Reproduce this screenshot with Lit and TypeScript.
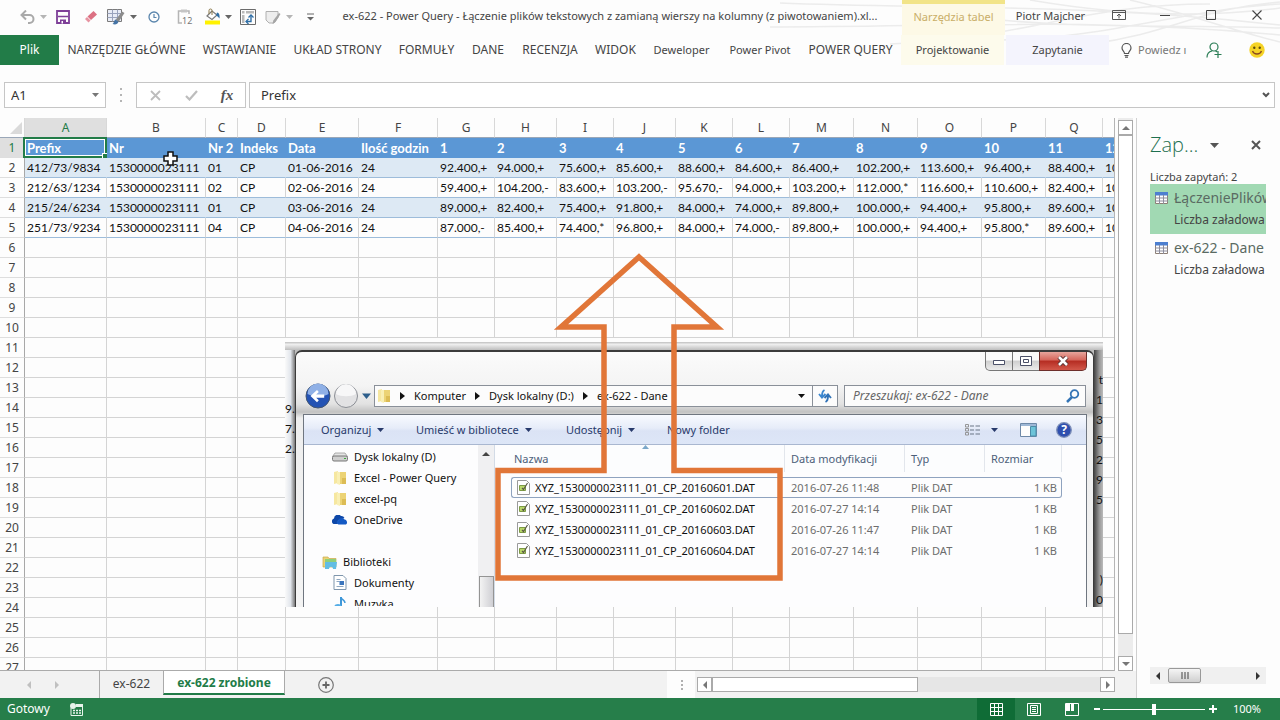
import { LitElement, html, css, svg, nothing } from "lit";
import { customElement } from "lit/decorators.js";
import { classMap } from "lit/directives/class-map.js";

const icon = (w: number, h: number, body: unknown) =>
  html`<svg width=${w} height=${h} viewBox="0 0 ${w} ${h}" fill="none" aria-hidden="true">${body}</svg>`;

const caret = (color: string) => icon(7, 4, svg`<path d="M0 0h7L3.500 4z" fill=${color} />`);
const arrow = (dir: "up" | "down" | "left" | "right", color: string) => {
  const d = { up: "M0 6l4-4 4 4z", down: "M0 2l4 4 4-4z", left: "M6 0L2 4l4 4z", right: "M2 0l4 4-4 4z" }[dir];
  return icon(8, 8, svg`<path d=${d} fill=${color} />`);
};

const pen = svg`<path d="M15 3.500l2.500 1.500-6 9-3-2z" fill="#8c8c8c"/><path d="M8.500 11.500l3 2.200c-1 3-3.500 3-6 2.300 1.500-.7 1.300-3.500 3-4.500z" fill="#4473a5"/>`;

const icons = {
  undo: icon(16, 14, svg`<path d="M2 5h7.500a4 4 0 010 8H8" stroke="#a9a9a9" stroke-width="2"/><path d="M6 .5L1.500 5 6 9.500" stroke="#a9a9a9" stroke-width="2"/>`),
  save: icon(14, 14, svg`<path d="M1 1h12v12H1z" stroke="#7e3f98" stroke-width="1.800"/><path d="M2 6.500h10" stroke="#7e3f98" stroke-width="1.500"/><path d="M4 9.500h6V14H4z" fill="#7e3f98"/><path d="M5.500 11H7v2.500H5.500z" fill="#fff"/>`),
  eraser: icon(14, 14, svg`<path d="M9.500 1L13 4.500 7 10 3.500 6.500z" fill="#dc7183"/><path d="M3 7l3.500 3.500L4.500 12.500 1 9z" fill="#e794a2"/>`),
  tablePen: icon(18, 17, svg`<path d="M.5 1.500h14v12H.500z" fill="#e9ecf6" stroke="#7a7a7a"/><path d="M.5 5.500h14M.5 9.500h14M5.500 1.500v12M10.500 1.500v12" stroke="#9aa3bd"/>${pen}`),
  clock: icon(12, 12, svg`<circle cx="6" cy="6" r="5" stroke="#5b86ad" stroke-width="1.300"/><path d="M6 3v3.500h2.500" stroke="#5b86ad" stroke-width="1.200"/>`),
  paste: icon(16, 17, svg`<path d="M5 15H1.500V3H12v3" stroke="#b5b5b5" stroke-width="1.500"/><path d="M4 1.500h6v3H4z" fill="#c5c5c5"/><text x="5" y="15.500" font-size="9" font-family="Noto Sans" fill="#777">12</text>`),
  fill: icon(17, 17, svg`<path d="M1 12.500h15v4H1z" fill="#fff200"/><path d="M3 8l5-5 5 4-5 4.500z" fill="#fff" stroke="#7a7a7a" stroke-width="1.200"/><path d="M5 6V2.500a1.500 1.500 0 013 0V7" stroke="#8c7a4a"/><path d="M13 4.500c2 .500 3 2 2.500 6-1.200-1.500-2-2.500-3.500-3z" fill="#2f6ea5"/>`),
  pivot: icon(16, 16, svg`<path d="M.5.5h15v15H.500z" stroke="#6b6b6b"/><path d="M2 2h2.500v2.500H2zM6 2h8v2.500H6zM2 6h2.500v8H2z" fill="#b9b9b9"/><path d="M6.500 12.500h4.500V7" stroke="#2f6ea5" stroke-width="1.400"/><path d="M8.500 10l-2.500 2.500 2.500 2.500M8.500 8.500L11 6l2.500 2.500" stroke="#2f6ea5" stroke-width="1.300"/>`),
  formPen: icon(16, 16, svg`<path d="M1 2.500h12v6L9 14H4l-3-3z" fill="#ededed" stroke="#b0b0b0"/><path d="M14 4l1.500 1-5 8-3 2 .8-3.500z" fill="#a5a5a5"/>`),
  customize: icon(7, 8, svg`<path d="M0 1h7" stroke="#666"/><path d="M0 4h7L3.500 7.500z" fill="#666"/>`),
  ribbonDisplay: icon(14, 10, svg`<path d="M.5.500h13v9H.500zM.5 2.500h13" stroke="#555"/><path d="M7 8.500V4.500M5 6l2-2 2 2" stroke="#555"/>`),
  minimize: icon(10, 10, svg`<path d="M0 5.500h10" stroke="#444"/>`),
  maximize: icon(10, 10, svg`<path d="M.5.500h9v9H.500z" stroke="#444"/>`),
  close: icon(10, 10, svg`<path d="M.5.500l9 9M9.500.500l-9 9" stroke="#444" stroke-width="1.100"/>`),
  bulb: icon(11, 15, svg`<path d="M3.500 10.500c0-2-2.500-2.800-2.500-5.500a4.500 4.500 0 019 0c0 2.700-2.500 3.500-2.500 5.500zM3.500 12.500h4M4 14.200h3" stroke="#555" stroke-width="1.200"/>`),
  share: icon(16, 16, svg`<circle cx="8" cy="5" r="4" stroke="#2a7d55" stroke-width="1.200"/><path d="M1 15.500c0-4 2.500-6 5-6.500M9.500 9l2 1" stroke="#2a7d55" stroke-width="1.200"/><path d="M12 9v7M8.500 12.500h7" stroke="#2a7d55" stroke-width="1.200"/>`),
  smile: icon(16, 16, svg`<circle cx="8" cy="8" r="7.700" fill="#f5d327"/><circle cx="5.300" cy="5.700" r="1.200" fill="#5b4a10"/><circle cx="10.700" cy="5.700" r="1.200" fill="#5b4a10"/><path d="M3.500 9c1.500 4 7.500 4 9 0" stroke="#8b4a20" stroke-width="1.300"/>`),
  cancel: icon(11, 11, svg`<path d="M1 1l9 9M10 1l-9 9" stroke="#bdbdbd" stroke-width="1.800"/>`),
  accept: icon(13, 11, svg`<path d="M1 6l3.500 3.500L12 1" stroke="#bdbdbd" stroke-width="2.200"/>`),
  chevron: icon(8, 6, svg`<path d="M1 1l3 3 3-3" stroke="#555" stroke-width="2"/>`),
  corner: icon(12, 12, svg`<path d="M12 0v12H0z" fill="#dadada"/>`),
  query: icon(13, 12, svg`<path d="M.5.500h12v11H.500z" fill="#fff" stroke="#8d7f74"/><path d="M0 0h13v3.500H0z" fill="#4d7fd0"/><path d="M0 6h13M0 9h13M4.500 3v9M8.500 3v9" stroke="#8d8d9d"/>`),
  closeBold: icon(10, 10, svg`<path d="M1 1l8 8M9 1l-8 8" stroke="#555" stroke-width="2"/>`),
  add: icon(16, 16, svg`<circle cx="8" cy="8" r="7.300" stroke="#777" stroke-width="1.200"/><path d="M8 4.500v7M4.500 8h7" stroke="#666" stroke-width="1.800"/>`),
  macro: icon(13, 13, svg`<path d="M1 5v7.500h11.500V1.500H7" stroke="#e8f4ec"/><circle cx="3" cy="3" r="3" fill="#e8f4ec"/><path d="M6 1h7v3H6z" fill="#e8f4ec"/><path d="M3 7.500h2M6 7.500h2M9 7.500h2M3 10h2M6 10h2M9 10h2" stroke="#e8f4ec" stroke-width="1.500"/>`),
  normal: icon(13, 13, svg`<path d="M.5.500h12v12H.500zM.5 4.500h12M.5 8.500h12M4.500.500v12M8.500.500v12" stroke="#fff"/>`),
  layout: icon(14, 13, svg`<path d="M.5.500h13v12H.500z" stroke="#fff"/><path d="M3.500 2.500h7v8h-7zM5 4.500h4M5 6.500h4M5 8.500h4" stroke="#fff"/>`),
  breaks: icon(14, 13, svg`<path d="M.5.500h13v12H.500z" stroke="#fff"/><path d="M1 1h4v7H1zM6 1h3v7H6z" fill="#fff"/>`),
  folder: icon(14, 16, svg`<path d="M1 2l4-1v12l-4 1z" fill="#f6e7a0"/><path d="M4 2h9v12H4z" fill="#ecd375"/><path d="M4 2h3v13l-3-1z" fill="#f9efb5"/><path d="M9 8h4v6H9z" fill="#dcbc55"/>`),
  drive: icon(16, 10, svg`<path d="M3 1h10l2.500 3.500h-15z" fill="#e4e4e4" stroke="#999" stroke-width=".8"/><rect x=".5" y="4" width="15" height="5" rx="1.500" fill="#cfcfcf" stroke="#777"/><path d="M12 6.500h2" stroke="#3fa83f"/>`),
  cloud: icon(15, 10, svg`<path d="M1 9a3 3 0 01.500-5.500A4 4 0 018.500 1 3.500 3.500 0 0112 3L6 5 5 9z" fill="#0d47a8"/><path d="M6 9.500a2.300 2.300 0 010-4.500 3.500 3.500 0 016-.5c2.500 0 3.500 4 1.500 5z" fill="#1459c4"/>`),
  library: icon(16, 14, svg`<path d="M1 2h5l1 1.500h7V12H1z" fill="#ecd375" stroke="#c9a94a" stroke-width=".7"/><path d="M3 4h11v3H3z" fill="#8fcf7a"/><path d="M3 7h12l-1 7h-3c0-3-4-3-4 0H3z" fill="#62bde4"/>`),
  doc: icon(13, 15, svg`<path d="M.5.500h9l3 3v11H.500z" fill="#fff" stroke="#7f96ad"/><path d="M3 4.500h4M3 6.500h3M3 11.500h7" stroke="#8fa7c0"/><path d="M6 6h4.500v4H6z" fill="#3b75bd"/>`),
  music: icon(13, 15, svg`<path d="M7.500 1v9.500" stroke="#3f97d8" stroke-width="2"/><path d="M7.500 1c.5 3 4 3 4 6" stroke="#3f97d8" stroke-width="1.500"/><ellipse cx="4.500" cy="11" rx="3.800" ry="3" fill="#55ade6"/>`),
  dat: icon(13, 15, svg`<path d="M.5.500h9l3 3v11H.500z" fill="#fff" stroke="#9a9a9a"/><path d="M2.500 5.500h6v5h-6z" fill="#b9d86a" stroke="#7d9a45"/><path d="M5 8l1.500 1.500 4-6.500" stroke="#5b5b45" stroke-width="1.200"/>`),
  back: icon(26, 26, svg`<circle cx="13" cy="13" r="12" fill="#2453b4" stroke="#44566f"/><path d="M2.500 11a10.500 10.500 0 0121 0c-5 3-15 3-21 0z" fill="#8fb0e6"/><path d="M5.500 13l6.500-6 1.800 2-2.600 2.500h8v3.200h-8l2.600 2.500-1.800 2z" fill="#fff"/>`),
  forward: icon(26, 26, svg`<circle cx="13" cy="13" r="11.500" fill="#e2e2e4" stroke="#8b8e95"/><path d="M3 11a10 10 0 0120 0c-5 3-15 3-20 0z" fill="#f7f7f8"/>`),
  refresh: icon(14, 14, svg`<path d="M6.500 1C4.500 2 4 4 4 7M1 5l3 3.500L7.500 5" stroke="#3b86cf" stroke-width="1.900"/><path d="M7.500 13c2-1 2.500-3 2.500-6M6.500 9L10 5.500 13 9" stroke="#2f72b8" stroke-width="1.900"/>`),
  search: icon(14, 14, svg`<circle cx="8.500" cy="5" r="3.800" stroke="#3474b5" stroke-width="1.800"/><path d="M6 8l-5 5" stroke="#3474b5" stroke-width="2.500"/>`),
  views: icon(15, 12, svg`<path d="M.5.500h3v2.500h-3zM.5 4.500h3V7h-3zM.5 8.500h3V11h-3z" stroke="#8c8c8c" stroke-width=".9"/><path d="M5 2h4M10.500 2H15M5 6h4M10.500 6H15M5 10h4M10.500 10H15" stroke="#6b7686" stroke-width="1.200"/>`),
  preview: icon(17, 14, svg`<path d="M.5.500h16v13H.500z" fill="#fdfdfd" stroke="#6d88a8"/><path d="M1 1h15v2H1z" fill="#9db7d6"/><path d="M10.500 3.500h5.500v9.500h-5.500z" fill="#6cc3d8" stroke="#4a8ba8"/>`),
  help: icon(16, 16, svg`<circle cx="8" cy="8" r="7.300" fill="#2f4fae" stroke="#7d8fb8" stroke-width="1.300"/><text x="8" y="12.200" text-anchor="middle" font-size="12" font-weight="700" font-family="Noto Sans" fill="#fff">?</text>`),
};

const columns: [string, number][] = [
  ["A", 82], ["B", 99], ["C", 32], ["D", 48], ["E", 73], ["F", 79], ["G", 57], ["H", 62], ["I", 57],
  ["J", 62], ["K", 57], ["L", 57], ["M", 64], ["N", 64], ["O", 64], ["P", 64], ["Q", 57], ["", 12],
];

const sheetData = [
  ["Prefix", "Nr", "Nr 2", "Indeks", "Data", "Ilość godzin", "1", "2", "3", "4", "5", "6", "7", "8", "9", "10", "11", "12"],
  ["412/73/9834", "1530000023111", "01", "CP", "01-06-2016", "24", "92.400,+", "94.000,+", "75.600,+", "85.600,+", "88.600,+", "84.600,+", "86.400,+", "102.200,+", "113.600,+", "96.400,+", "88.400,+", "10"],
  ["212/63/1234", "1530000023111", "02", "CP", "02-06-2016", "24", "59.400,+", "104.200,-", "83.600,+", "103.200,-", "95.670,-", "94.000,+", "103.200,+", "112.000,*", "116.600,+", "110.600,+", "82.400,+", "10"],
  ["215/24/6234", "1530000023111", "01", "CP", "03-06-2016", "24", "89.000,+", "82.400,+", "75.400,+", "91.800,+", "84.000,+", "74.000,+", "89.800,+", "100.000,+", "94.400,+", "95.800,+", "89.600,+", "10"],
  ["251/73/9234", "1530000023111", "04", "CP", "04-06-2016", "24", "87.000,-", "85.400,+", "74.400,*", "96.800,+", "84.000,+", "74.000,-", "89.800,+", "100.000,+", "94.400,+", "95.800,*", "89.600,+", "10"],
];

const ribbonTabs = ["NARZĘDZIE GŁÓWNE", "WSTAWIANIE", "UKŁAD STRONY", "FORMUŁY", "DANE", "RECENZJA", "WIDOK", "Deweloper", "Power Pivot", "POWER QUERY"];

const base = css`
  * { box-sizing: border-box; }
  button { border: 0; padding: 0; margin: 0; background: none; font: inherit; color: inherit; display: flex; align-items: center; justify-content: center; white-space: nowrap; }
  input { border: 0; padding: 0; margin: 0; background: none; font: inherit; color: inherit; min-width: 0; outline: 0; }
  svg { display: block; flex: none; }
  table { border-collapse: separate; border-spacing: 0; table-layout: fixed; }
  th, td { padding: 0; text-align: left; font-weight: 400; white-space: nowrap; }
`;

@customElement("app-titlebar")
class AppTitlebar extends LitElement {
  static styles = [base, css`
    :host { display: block; position: relative; color: #444; font-size: 11px; }
    .swirl { position: absolute; top: 0; right: 0; z-index: 0; }
    .title, .ribbon { position: relative; display: flex; }
    .title { height: 35px; }
    .ribbon { height: 30px; }
    .qat { display: grid; grid-template-columns: 20px 11px 28px 28px 22px 12px 30px 32px 23px 9px 30px 20px 12px 30px; padding-left: 18px; height: 33px; align-items: center; flex: none; }
    .qat button { height: 24px; }
    h1 { margin: 0; flex: 1; font-size: 11px; line-height: 32px; font-weight: 400; text-align: center; white-space: nowrap; overflow: hidden; min-width: 0; }
    .context { width: 103px; margin-left: 7px; border-top: 4px solid #f2e488; background: #fdf9e6; color: #c9ae68; line-height: 25px; text-align: center; flex: none; }
    .user { width: 91px; line-height: 32px; text-align: center; flex: none; }
    .window { display: flex; height: 30px; flex: none; }
    .window button { width: 46px; }
    .file { width: 59px; background: #227c48; color: #fff; font-size: 12px; flex: none; }
    .tabs { display: grid; grid-template-columns: 135px 91px 105px 73px 50px 74px 57px 75px 82px 99px; margin-right: auto; }
    .tabs .caps { font-size: 12px; }
    .design { width: 103px; background: #fdfbec; margin-right: 2px; flex: none; }
    .query { width: 103px; background: #f4f4fd; flex: none; }
    .tell { width: 91px; gap: 6px; padding-left: 12px; justify-content: flex-start; color: #777; flex: none; }
    .share { width: 28px; flex: none; }
    .smile { width: 52px; padding-left: 6px; flex: none; }
  `];
  render() {
    const q = (label: string, body: unknown) => html`<button aria-label=${label}>${body}</button>`;
    return html`
      <svg class="swirl" width="620" height="46" viewBox="0 0 620 46" fill="none" stroke="#ececec" stroke-width="1.500" aria-hidden="true">
        <path d="M120 3c150 6 300 0 500 22M110 27c180 0 330-10 510 8M370 0c70 12 160 20 250 8M230 44c140-6 190-40 320-40M470 0c60 14 100 30 150 42M340 40c110-2 180-30 280-36M430 44c80-10 110-36 190-42M300 16c120 14 200 8 320 12" />
      </svg>
      <div class="title">
        <div class="qat">
          ${q("Cofnij", icons.undo)}${q("Lista cofania", caret("#b5b5b5"))}${q("Zapisz", icons.save)}${q("Wyczyść", icons.eraser)}
          ${q("Format", icons.tablePen)}${q("Opcje formatu", caret("#666"))}${q("Czas", icons.clock)}${q("Wklej wartości", icons.paste)}
          ${q("Wypełnienie", icons.fill)}${q("Kolor wypełnienia", caret("#666"))}${q("Tabela przestawna", icons.pivot)}
          ${q("Formularz", icons.formPen)}${q("Opcje formularza", caret("#b5b5b5"))}${q("Dostosuj", icons.customize)}
        </div>
        <h1>ex-622 - Power Query - Łączenie plików tekstowych z zamianą wierszy na kolumny (z piwotowaniem).xl...</h1>
        <div class="context">Narzędzia tabel</div>
        <div class="user">Piotr Majcher</div>
        <div class="window">
          ${q("Wstążka", icons.ribbonDisplay)}${q("Minimalizuj", icons.minimize)}${q("Maksymalizuj", icons.maximize)}${q("Zamknij", icons.close)}
        </div>
      </div>
      <nav class="ribbon">
        <button class="file">Plik</button>
        <div class="tabs">${ribbonTabs.map((t) => html`<button class=${classMap({ caps: t === t.toUpperCase() })}>${t}</button>`)}</div>
        <button class="design">Projektowanie</button>
        <button class="query">Zapytanie</button>
        <button class="tell">${icons.bulb}Powiedz ı</button>
        <button class="share" aria-label="Udostępnij">${icons.share}</button>
        <button class="smile" aria-label="Opinia">${icons.smile}</button>
      </nav>`;
  }
}

@customElement("formula-bar")
class FormulaBar extends LitElement {
  static styles = [base, css`
    :host { display: flex; height: 26px; margin: 17px 5px 10px 4px; color: #333; font-size: 13px; }
    .box { display: flex; border: 1px solid #c6c6c6; background: #fff; align-items: center; }
    .name { width: 102px; padding: 0 6px; }
    .name input { flex: 1; }
    .dots { width: 30px; display: flex; align-items: center; justify-content: center; }
    .tools { width: 110px; justify-content: space-around; margin-right: 3px; }
    .tools button { width: 32px; height: 24px; }
    .fx { font: italic 700 15px "Liberation Serif", serif; color: #555; }
    .formula { flex: 1; padding: 0 4px 0 11px; }
    .formula input { flex: 1; }
  `];
  render() {
    return html`
      <div class="box name"><input aria-label="Pole nazwy" value="A1" /><button aria-label="Lista nazw">${caret("#777")}</button></div>
      <div class="dots">${icon(2, 14, svg`<path d="M0 0h2v2H0zM0 6h2v2H0zM0 12h2v2H0z" fill="#b5b5b5"/>`)}</div>
      <div class="box tools">
        <button aria-label="Anuluj">${icons.cancel}</button><button aria-label="Wpis">${icons.accept}</button><button class="fx">fx</button>
      </div>
      <div class="box formula"><input aria-label="Pasek formuły" value="Prefix" /><button aria-label="Rozwiń pasek formuły">${icons.chevron}</button></div>`;
  }
}

@customElement("sheet-grid")
class SheetGrid extends LitElement {
  static styles = [base, css`
    :host { display: block; color: #111; font: 12px/18px Lato, sans-serif; }
    table { width: 1115px; }
    tr, th, td { height: 20px; }
    td { padding: 1px 0 0 2px; border-right: 1px solid #d4d4d4; border-bottom: 1px solid #d4d4d4; position: relative; }
    thead th, tbody th { font: 12px/18px "Noto Sans", sans-serif; text-align: center; color: #444; padding-top: 1px; }
    thead th { border-right: 1px solid #d8d8d8; border-bottom: 1px solid #9aa7b8; }
    tbody th { border-right: 1px solid #a8a8a8; border-bottom: 1px solid #dedede; }
    .corner svg { margin-left: 10px; }
    thead th.on, tbody th.on { background: #dfdfdf; color: #227c48; }
    .head td { background: #5b97d5; color: #fff; font-weight: 700; font-size: 13px; border-color: #5b97d5; }
    .band td { background: #dde9f4; border-color: #dde9f4; }
    .data td { border-bottom-color: #9dbcda; }
    td:last-child { overflow: hidden; }
    .cursor-cell { position: absolute; inset: -1px -1px -1px -2px; border: 2px solid #227c48; box-shadow: inset 0 0 0 1px #fff; }
    .handle { position: absolute; right: -3px; bottom: -3px; width: 6px; height: 6px; background: #227c48; border: solid #fff; border-width: 1px 0 0 1px; }
  `];
  render() {
    return html`<table>
      <colgroup><col style="width:25px" />${columns.map(([, w]) => html`<col style="width:${w}px" />`)}</colgroup>
      <thead><tr><th class="corner">${icons.corner}</th>${columns.map(([n], i) => html`<th class=${classMap({ on: i === 0 })}>${n}</th>`)}</tr></thead>
      <tbody>${Array.from({ length: 27 }, (_, r) => html`
        <tr class=${classMap({ head: r === 0, data: r > 0 && r < 5, band: r === 1 || r === 3 })}>
          <th class=${classMap({ on: r === 0 })}>${r + 1}</th>
          ${columns.map((_c, c) => html`<td>${sheetData[r]?.[c] ?? nothing}${r === 0 && c === 0 ? html`<span class="cursor-cell"><span class="handle"></span></span>` : nothing}</td>`)}
        </tr>`)}
      </tbody>
    </table>`;
  }
}

const files: [string, string][] = [
  ["XYZ_1530000023111_01_CP_20160601.DAT", "2016-07-26 11:48"],
  ["XYZ_1530000023111_01_CP_20160602.DAT", "2016-07-27 14:14"],
  ["XYZ_1530000023111_01_CP_20160603.DAT", "2016-07-26 11:47"],
  ["XYZ_1530000023111_01_CP_20160604.DAT", "2016-07-27 14:14"],
];

@customElement("explorer-window")
class ExplorerWindow extends LitElement {
  static styles = [base, css`
    :host { display: grid; grid-template-columns: 10px 1fr 9px; width: 818px; height: 269px; padding-top: 12px; overflow: hidden; color: #111; font: 11px/20px "Noto Sans", sans-serif; background: linear-gradient(#fdfdfd 4px, #c9c9c9 4px, #c9c9c9 5px, #f2f2f2 6px, #bdbdbd 12px); }
    .edge { font: 12px/20px Lato, sans-serif; padding-top: 49px; white-space: nowrap; overflow: hidden; }
    .left { background: linear-gradient(90deg, #fafafa, #e2e6ec 55%, #777); }
    .right { background: linear-gradient(90deg, #444, #999 60%, #bbb); padding-top: 20px; text-align: right; }
    .edge div { height: 20px; }
    .win { border: 1px solid #3b3b3b; border-width: 2px 1px 0; border-radius: 7px 7px 0 0; background: linear-gradient(#fbfbfb, #f4f4f4 34px, #e2e2e2 52px, #c2c2c2 60px, #eee 66px, #f4f4f4); display: flex; flex-direction: column; min-width: 0; }
    .caption { display: flex; justify-content: flex-end; height: 32px; padding-right: 6px; }
    .caption button { height: 19px; border: 1px solid #777; border-top: 0; background: linear-gradient(#fafafa 45%, #cfcfcf 50%, #ececec); width: 28px; margin-left: -1px; }
    .caption .min { border-radius: 0 0 0 5px; }
    .caption .shut { width: 48px; border-radius: 0 0 5px 0; background: linear-gradient(#e7a59c, #d5655a 45%, #b52c22 50%, #d2584a); border-color: #6d2e2a; }
    .nav { display: flex; height: 24px; padding: 0 7px 0 9px; align-items: center; gap: 2px; }
    .nav .recent { width: 11px; }
    .address { flex: 1; height: 22px; display: flex; align-items: center; border: 1px solid #8a9099; background: #fcfcfc; padding-left: 2px; gap: 9px; margin-right: 4px; }
    .address .drop { width: 22px; margin-left: auto; }
    .address .refresh { width: 25px; height: 20px; border-left: 1px solid #8a9099; margin-left: -9px; }
    .find { width: 242px; height: 22px; display: flex; align-items: center; border: 1px solid #8a9099; background: #fcfcfc; padding: 0 5px 0 8px; font-size: 12px; }
    .find input { flex: 1; font-style: italic; }
    .find input::placeholder { color: #666; opacity: 1; }
    .inner { margin: 6px 6px 0 7px; border: 1px solid #6f7680; border-bottom: 0; flex: 1; display: flex; flex-direction: column; min-height: 0; background: #fdfdfe; }
    .bar { height: 30px; display: grid; grid-template-columns: 95px 150px 101px auto 1fr 26px 29px 36px 30px; padding-left: 17px; background: linear-gradient(#f8faff, #e6ecf9 45%, #dbe3f5 55%, #dde6f7); border-bottom: 1px solid #a9b7d0; color: #283a6b; }
    .bar button { justify-content: flex-start; gap: 6px; }
    .split { flex: 1; display: grid; grid-template-columns: 174px 17px 1fr; min-height: 0; }
    .tree { margin: 0; padding: 1px 0 0 28px; list-style: none; overflow: hidden; height: 161px; }
    .tree li { display: flex; height: 21px; align-items: center; gap: 6px; }
    .tree .top { padding: 0; margin-left: -10px; gap: 5px; }
    .tree svg { min-width: 16px; }
    .scroll { background: #f0f0f2; border-right: 1px solid #d3dbe6; display: flex; flex-direction: column; justify-content: space-between; align-items: center; padding-top: 5px; }
    .thumb { width: 15px; height: 31px; border: 1px solid #949494; border-bottom: 0; background: linear-gradient(90deg, #f3f3f3, #cfcfd4); }
    .list { padding: 0 24px 0 16px; }
    table { width: 100%; }
    thead th { height: 27px; border-right: 1px solid #e2e6ec; color: #4c607a; padding-left: 6px; background: #fcfdfe; }
    thead th:first-child { padding-left: 3px; position: relative; }
    .sort { position: absolute; left: 131px; top: 0; }
    tbody .gap { height: 5px; }
    .files td { height: 21px; line-height: 19px; padding-left: 6px; color: #6d6d6d; border: 1px solid transparent; border-width: 1px 0; }
    .files td:first-child { padding-left: 5px; border-left-width: 1px; }
    .files td:last-child { text-align: right; padding-right: 4px; border-right-width: 1px; }
    .files .sel td { border-color: #8fa3bf; }
    .files .sel td:first-child { border-radius: 3px 0 0 3px; }
    .files .sel td:last-child { border-radius: 0 3px 3px 0; }
    .fname { display: flex; align-items: center; gap: 5px; color: #111; }
  `];
  render() {
    const sep = () => icon(5, 8, svg`<path d="M0 0l5 4-5 4z" fill="#111"/>`);
    const dd = () => caret("#283a6b");
    return html`
      <div class="edge left">${["9.", "7.", "2."].map((t) => html`<div>${t}</div>`)}</div>
      <section class="win">
        <div class="caption">
          <button class="min" aria-label="Minimalizuj">${icon(12, 8, svg`<path d="M.5 3.500h11v4H.500z" fill="#fff" stroke="#4b5068"/>`)}</button>
          <button aria-label="Maksymalizuj">${icon(12, 10, svg`<path d="M.5.500h11v9H.500z" fill="#fff" stroke="#4b5068"/><path d="M3.500 3.500h5v3h-5z" stroke="#4b5068"/>`)}</button>
          <button class="shut" aria-label="Zamknij">${icon(12, 10, svg`<path d="M2 1l8 8M10 1L2 9" stroke="#5b3535" stroke-width="4.500"/><path d="M2 1l8 8M10 1L2 9" stroke="#fff" stroke-width="2.500"/>`)}</button>
        </div>
        <div class="nav">
          <button aria-label="Wstecz">${icons.back}</button>
          <button aria-label="Dalej">${icons.forward}</button>
          <button class="recent" aria-label="Ostatnie strony">${icon(9, 6, svg`<path d="M0 .5h9L4.500 6z" fill="#2e5f8c"/>`)}</button>
          <div class="address">
            ${icons.folder}${sep()}<span>Komputer</span>${sep()}<span>Dysk lokalny (D:)</span>${sep()}<span>ex-622 - Dane</span>
            <button class="drop" aria-label="Poprzednie lokalizacje">${caret("#111")}</button>
            <button class="refresh" aria-label="Odśwież">${icons.refresh}</button>
          </div>
          <div class="find"><input aria-label="Przeszukaj" placeholder="Przeszukaj: ex-622 - Dane" />${icons.search}</div>
        </div>
        <div class="inner">
          <div class="bar">
            <button>Organizuj ${dd()}</button><button>Umieść w bibliotece ${dd()}</button><button>Udostępnij ${dd()}</button><button>Nowy folder</button><span></span>
            <button aria-label="Widok">${icons.views}</button><button aria-label="Więcej opcji">${caret("#283a6b")}</button>
            <button aria-label="Okienko podglądu">${icons.preview}</button><button aria-label="Pomoc">${icons.help}</button>
          </div>
          <div class="split">
            <ul class="tree">
              <li>${icons.drive}Dysk lokalny (D)</li><li>${icons.folder}Excel - Power Query</li><li>${icons.folder}excel-pq</li><li>${icons.cloud}OneDrive</li>
              <li></li><li class="top">${icons.library}Biblioteki</li><li>${icons.doc}Dokumenty</li><li>${icons.music}Muzyka</li>
            </ul>
            <div class="scroll">${arrow("up", "#444")}<div class="thumb"></div></div>
            <div class="list">
              <table>
                <colgroup><col /><col style="width:120px" /><col style="width:80px" /><col style="width:77px" /></colgroup>
                <thead><tr><th>Nazwa<span class="sort">${icon(7, 4, svg`<path d="M0 4h7L3.500 0z" fill="#7aa7c9"/>`)}</span></th><th>Data modyfikacji</th><th>Typ</th><th>Rozmiar</th></tr></thead>
                <tbody><tr class="gap"></tr></tbody>
                <tbody class="files">${files.map(([n, d], i) => html`
                  <tr class=${classMap({ sel: i === 0 })}><td><span class="fname">${icons.dat}${n}</span></td><td>${d}</td><td>Plik DAT</td><td>1 KB</td></tr>`)}
                </tbody>
              </table>
            </div>
          </div>
        </div>
      </section>
      <div class="edge right">${["t", "1", "3", "5", "2", "9", "5", "", "", "", ")", "0"].map((t) => html`<div>${t}</div>`)}</div>`;
  }
}

@customElement("query-pane")
class QueryPane extends LitElement {
  static styles = [base, css`
    :host { display: flex; flex-direction: column; width: 144px; flex: none; border-left: 1px solid #d0d0d0; padding: 8px 14px 14px 13px; color: #444; }
    header { display: flex; align-items: center; height: 38px; }
    h2 { margin: 0; font: 300 20px/30px "Open Sans", sans-serif; color: #1f7050; flex: 1; }
    header button { width: 20px; height: 20px; }
    .shut { margin-left: 22px; }
    .count { font-size: 11px; line-height: 15px; padding-top: 5px; }
    .item { height: 50px; padding: 4px 0 0 5px; display: grid; grid-template-columns: 19px 1fr; grid-template-rows: 20px 24px; align-items: center; width: 116px; overflow: hidden; white-space: nowrap; }
    .item.on { background: #a1d9b3; }
    .item strong { font-weight: 400; font-size: 14px; color: #5a6a62; }
    .item span { grid-column: 2; }
    .scroll { margin-top: auto; height: 17px; background: #f0f0f0; display: flex; align-items: center; padding: 0 4px; }
    .thumb { width: 33px; height: 15px; border: 1px solid #999; border-radius: 2px; background: linear-gradient(#f5f5f5, #cfcfcf); display: flex; align-items: center; justify-content: center; margin: 0 auto 0 6px; }
  `];
  render() {
    return html`
      <header><h2>Zap...</h2><button aria-label="Opcje okienka">${icon(9, 5, svg`<path d="M0 0h9L4.500 5z" fill="#555"/>`)}</button><button class="shut" aria-label="Zamknij">${icons.closeBold}</button></header>
      <div class="count">Liczba zapytań: 2</div>
      <div class="item on">${icons.query}<strong>ŁączeniePlików</strong><span>Liczba załadowa</span></div>
      <div class="item">${icons.query}<strong>ex-622 - Dane</strong><span>Liczba załadowa</span></div>
      <div class="scroll">${arrow("left", "#333")}<div class="thumb">${icon(8, 7, svg`<path d="M1 0v7M4 0v7M7 0v7" stroke="#444"/>`)}</div>${arrow("right", "#333")}</div>`;
  }
}

@customElement("app-root")
class AppRoot extends LitElement {
  static styles = [base, css`
    :host { display: flex; flex-direction: column; height: 100vh; overflow: hidden; background: #fdfdfd; font: 12px/16px "Noto Sans", sans-serif; color: #444; }
    .main { flex: 1; display: flex; min-height: 0; }
    .book { flex: 1; display: flex; flex-direction: column; min-width: 0; }
    .work { flex: 1; display: flex; min-height: 0; }
    .sheet { flex: 1; position: relative; overflow: hidden; border-right: 1px solid #b5b5b5; border-bottom: 1px solid #ababab; min-width: 0; }
    .overlay { position: absolute; left: 285px; top: 220px; }
    .callout { position: absolute; left: 485px; top: 130px; }
    .pointer { position: absolute; left: 162px; top: 32px; }
    .vscroll { width: 21px; padding: 2px 3px 0; display: flex; flex-direction: column; background: linear-gradient(90deg, transparent 3px, #ececec 3px, #ececec 18px, transparent 18px); }
    .square { width: 15px; height: 15px; border: 1px solid #aaa; background: #fff; flex: none; }
    .vthumb { border: 1px solid #aaa; background: #fff; margin-bottom: auto; min-height: 0; flex: 0 1 499px; }
    .tabbar { height: 27px; display: flex; background: #f2f2f2; flex: none; }
    .tabbar .steps { width: 100px; display: flex; gap: 20px; justify-content: center; padding-right: 15px; }
    .first { width: 64px; border-left: 1px solid #aaa; margin-left: -1px; padding-bottom: 2px; }
    .active { width: 122px; height: 25px; margin-top: -1px; padding-top: 3px; background: #fff; border: solid #aaa; border-width: 0 1px; border-bottom: 2px solid #227c48; color: #227c48; font-weight: 700; }
    .new { width: 40px; margin: 0 21px; }
    .hs { margin-left: auto; display: flex; align-items: center; padding-right: 21px; background: linear-gradient(90deg, #fdfdfd 28px, transparent 28px); }
    .hs .dots { width: 30px; display: flex; justify-content: center; }
    .hthumb { width: 206px; height: 15px; border: 1px solid #aaa; background: #fff; }
    .htrack { width: 182px; height: 15px; background: #e6e6e6; }
    .status { height: 22px; background: #267e4a; color: #fff; display: flex; align-items: center; padding: 0 19px 0 7px; flex: none; }
    .macro { margin: 0 auto 0 20px; }
    .view { width: 38px; height: 22px; }
    .view.on { background: #0f6c36; }
    .zoom { width: 102px; height: 14px; appearance: none; margin: 0 2px 0 0; background: linear-gradient(#fff, #fff) center / 100% 1px no-repeat; }
    .zoom::-webkit-slider-thumb { appearance: none; width: 4px; height: 11px; background: #fff; }
    .step { width: 12px; }
    .percent { width: 34px; text-align: right; margin-left: 8px; font-size: 11px; }
  `];
  render() {
    return html`
      <app-titlebar></app-titlebar>
      <formula-bar></formula-bar>
      <div class="main">
        <div class="book">
          <div class="work">
            <div class="sheet">
              <sheet-grid></sheet-grid>
              <explorer-window class="overlay"></explorer-window>
              <svg class="callout" width="305" height="340" viewBox="0 0 305 340" fill="none" aria-hidden="true">
                <path d="M154 9L232 79H189V222.500H295V330H13V222.500H119V79H76Z" stroke="#e17638" stroke-width="5.500" />
              </svg>
              <svg class="pointer" width="17" height="17" viewBox="0 0 17 17" fill="#fff" aria-hidden="true"><path d="M6 2h5v4h4v5h-4v4H6v-4H2V6h4z" stroke="#111" stroke-width="1.500" /></svg>
            </div>
            <div class="vscroll"><button class="square" aria-label="W górę">${arrow("up", "#777")}</button><div class="vthumb"></div><button class="square" aria-label="W dół">${arrow("down", "#777")}</button></div>
          </div>
          <div class="tabbar">
            <div class="steps"><button aria-label="Poprzedni arkusz">${arrow("left", "#c0c0c0")}</button><button aria-label="Następny arkusz">${arrow("right", "#c0c0c0")}</button></div>
            <button class="first">ex-622</button><button class="active">ex-622 zrobione</button>
            <button class="new" aria-label="Nowy arkusz">${icons.add}</button>
            <div class="hs">
              <div class="dots">${icon(2, 10, svg`<path d="M0 0h2v2H0zM0 4h2v2H0zM0 8h2v2H0z" fill="#b0b0b0"/>`)}</div>
              <button class="square" aria-label="W lewo">${arrow("left", "#777")}</button><div class="hthumb"></div><div class="htrack"></div><button class="square" aria-label="W prawo">${arrow("right", "#777")}</button>
            </div>
          </div>
        </div>
        <query-pane></query-pane>
      </div>
      <footer class="status">
        <span>Gotowy</span><span class="macro">${icons.macro}</span>
        <button class="view on" aria-label="Normalny">${icons.normal}</button><button class="view" aria-label="Układ strony">${icons.layout}</button><button class="view" aria-label="Podział stron">${icons.breaks}</button>
        <button class="step" aria-label="Pomniejsz">${icon(8, 8, svg`<path d="M1 4h6" stroke="#fff" stroke-width="2"/>`)}</button>
        <input class="zoom" type="range" aria-label="Powiększenie" min="0" max="200" value="100" />
        <button class="step" aria-label="Powiększ">${icon(8, 8, svg`<path d="M0 4h8M4 0v8" stroke="#fff" stroke-width="2"/>`)}</button>
        <span class="percent">100%</span>
      </footer>`;
  }
}
